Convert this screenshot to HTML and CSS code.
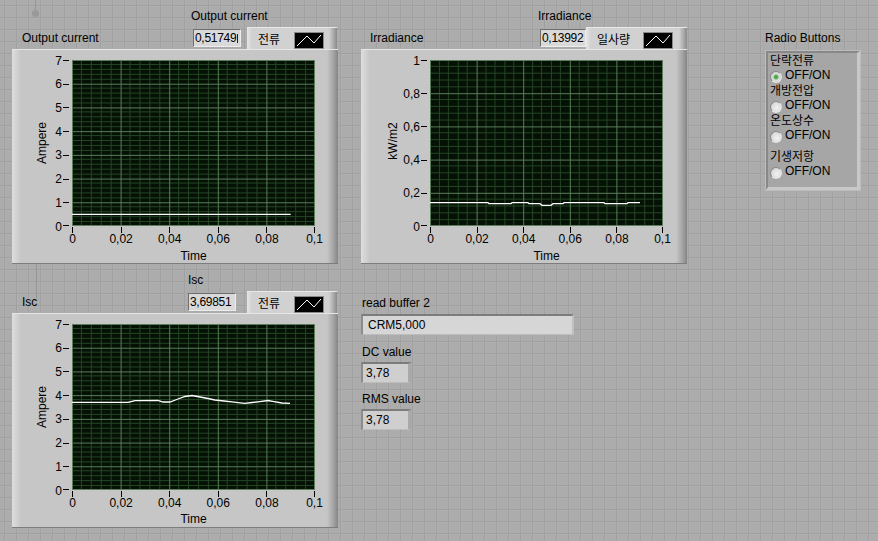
FILE: index.html
```html
<!DOCTYPE html>
<html lang="ko">
<head>
<meta charset="utf-8">
<title>Front Panel</title>
<link rel="stylesheet" href="styles.css">
</head>
<body>
<main class="panel">
  <span class="origin origin-top"></span>
  <span class="origin-line origin-line-top"></span>
  <span class="origin-line origin-line-mid"></span>

  <section class="graph g1">
    <div class="graph-head">
      <span class="cap">Output current</span>
      <div class="readout">
        <span class="readout-label">Output current</span>
        <span class="readout-box clipped">0,51749</span>
      </div>
      <div class="legend">
        <span>전류</span>
        <svg class="legend-icon" width="28" height="15" viewBox="0 0 28 15"><polyline points="2,13 12,3 19,10 26,2"/></svg>
      </div>
    </div>
    <div class="frame">
      <svg class="plot" width="326" height="213" viewBox="0 0 326 213">
        <defs>
          <pattern id="grid1" x="60" y="10" width="48.6" height="23.714" patternUnits="userSpaceOnUse">
            <path class="minor" d="M9.72 0V23.714M19.44 0V23.714M29.16 0V23.714M38.88 0V23.714M0 4.743H48.6M0 9.486H48.6M0 14.229H48.6M0 18.971H48.6"/>
            <path class="major" d="M0.5 0V23.714M0 0.5H48.6"/>
          </pattern>
        </defs>
        <rect class="plot-bg" x="60" y="10" width="243" height="166"/>
        <rect x="60" y="10" width="243" height="166" fill="url(#grid1)"/>
        <path class="major" d="M302.5 10V176M60 175.5H303"/>
        <path class="tick" d="M51 10.5H57M51 34.2H57M51 57.9H57M51 81.6H57M51 105.4H57M51 129.1H57M51 152.8H57M51 175.5H57"/>
        <path class="tick" d="M60.5 177V183M109.1 177V183M157.7 177V183M206.3 177V183M254.9 177V183M302.5 177V183"/>
        <g class="ylab">
          <text x="50" y="14.5">7</text>
          <text x="50" y="38.2">6</text>
          <text x="50" y="61.9">5</text>
          <text x="50" y="85.6">4</text>
          <text x="50" y="109.4">3</text>
          <text x="50" y="133.1">2</text>
          <text x="50" y="156.8">1</text>
          <text x="50" y="180.5">0</text>
        </g>
        <g class="xlab">
          <text x="60.5" y="193">0</text>
          <text x="109.1" y="193">0,02</text>
          <text x="157.7" y="193">0,04</text>
          <text x="206.3" y="193">0,06</text>
          <text x="254.9" y="193">0,08</text>
          <text x="302.5" y="193">0,1</text>
        </g>
        <text class="axis-name" x="181.5" y="210">Time</text>
        <text class="axis-name" transform="translate(34 93) rotate(-90)">Ampere</text>
        <polyline class="trace" points="60,164.3 278.7,164.3"/>
      </svg>
    </div>
  </section>

  <section class="graph g2">
    <div class="graph-head">
      <span class="cap">Irradiance</span>
      <div class="readout">
        <span class="readout-label">Irradiance</span>
        <span class="readout-box">0,13992</span>
      </div>
      <div class="legend">
        <span>일사량</span>
        <svg class="legend-icon" width="28" height="15" viewBox="0 0 28 15"><polyline points="2,13 12,3 19,10 26,2"/></svg>
      </div>
    </div>
    <div class="frame">
      <svg class="plot" width="326" height="213" viewBox="0 0 326 213">
        <defs>
          <pattern id="grid2" x="69" y="10" width="46.6" height="33.2" patternUnits="userSpaceOnUse">
            <path class="minor" d="M9.32 0V33.2M18.64 0V33.2M27.96 0V33.2M37.28 0V33.2M0 6.64H46.6M0 13.28H46.6M0 19.92H46.6M0 26.56H46.6"/>
            <path class="major" d="M0.5 0V33.2M0 0.5H46.6"/>
          </pattern>
        </defs>
        <rect class="plot-bg" x="69" y="10" width="233" height="166"/>
        <rect x="69" y="10" width="233" height="166" fill="url(#grid2)"/>
        <path class="major" d="M301.5 10V176M69 175.5H302"/>
        <path class="tick" d="M60 10.5H66M60 43.7H66M60 76.9H66M60 110.1H66M60 143.3H66M60 175.5H66"/>
        <path class="tick" d="M69.5 177V183M116.1 177V183M162.7 177V183M209.3 177V183M255.9 177V183M301.5 177V183"/>
        <g class="ylab">
          <text x="59" y="14.5">1</text>
          <text x="59" y="47.7">0,8</text>
          <text x="59" y="80.9">0,6</text>
          <text x="59" y="114.1">0,4</text>
          <text x="59" y="147.3">0,2</text>
          <text x="59" y="180.5">0</text>
        </g>
        <g class="xlab">
          <text x="69.5" y="193">0</text>
          <text x="116.1" y="193">0,02</text>
          <text x="162.7" y="193">0,04</text>
          <text x="209.3" y="193">0,06</text>
          <text x="255.9" y="193">0,08</text>
          <text x="301.5" y="193">0,1</text>
        </g>
        <text class="axis-name" x="185.5" y="210">Time</text>
        <text class="axis-name" transform="translate(36 91) rotate(-90)">kW/m2</text>
        <polyline class="trace" points="69,152.7 127,152.7 128,153.7 150,153.7 151,152.7 167,152.7 168,153.7 179,153.7 181,155.3 190,155.3 192,153.7 202,153.7 203,152.7 243,152.7 244,153.7 266,153.7 267,152.7 279,152.7"/>
      </svg>
    </div>
  </section>

  <section class="graph g3">
    <div class="graph-head">
      <span class="cap">Isc</span>
      <div class="readout">
        <span class="readout-label">Isc</span>
        <span class="readout-box">3,69851</span>
      </div>
      <div class="legend">
        <span>전류</span>
        <svg class="legend-icon" width="28" height="15" viewBox="0 0 28 15"><polyline points="2,13 12,3 19,10 26,2"/></svg>
      </div>
    </div>
    <div class="frame">
      <svg class="plot" width="326" height="213" viewBox="0 0 326 213">
        <defs>
          <pattern id="grid3" x="60" y="10" width="48.6" height="23.714" patternUnits="userSpaceOnUse">
            <path class="minor" d="M9.72 0V23.714M19.44 0V23.714M29.16 0V23.714M38.88 0V23.714M0 4.743H48.6M0 9.486H48.6M0 14.229H48.6M0 18.971H48.6"/>
            <path class="major" d="M0.5 0V23.714M0 0.5H48.6"/>
          </pattern>
        </defs>
        <rect class="plot-bg" x="60" y="10" width="243" height="166"/>
        <rect x="60" y="10" width="243" height="166" fill="url(#grid3)"/>
        <path class="major" d="M302.5 10V176M60 175.5H303"/>
        <path class="tick" d="M51 10.5H57M51 34.2H57M51 57.9H57M51 81.6H57M51 105.4H57M51 129.1H57M51 152.8H57M51 175.5H57"/>
        <path class="tick" d="M60.5 177V183M109.1 177V183M157.7 177V183M206.3 177V183M254.9 177V183M302.5 177V183"/>
        <g class="ylab">
          <text x="50" y="14.5">7</text>
          <text x="50" y="38.2">6</text>
          <text x="50" y="61.9">5</text>
          <text x="50" y="85.6">4</text>
          <text x="50" y="109.4">3</text>
          <text x="50" y="133.1">2</text>
          <text x="50" y="156.8">1</text>
          <text x="50" y="180.5">0</text>
        </g>
        <g class="xlab">
          <text x="60.5" y="193">0</text>
          <text x="109.1" y="193">0,02</text>
          <text x="157.7" y="193">0,04</text>
          <text x="206.3" y="193">0,06</text>
          <text x="254.9" y="193">0,08</text>
          <text x="302.5" y="193">0,1</text>
        </g>
        <text class="axis-name" x="181.5" y="209">Time</text>
        <text class="axis-name" transform="translate(34 93) rotate(-90)">Ampere</text>
        <polyline class="trace" points="60,88.3 116,88.3 123,86.6 146,86.4 151,88 158,88 166,85 173,82.5 180,81.5 188,83 196,84.5 203,86 212,87 220,87.8 226,88.6 233,89.4 240,88.5 246,87.8 256,86.5 262,87.6 270,89 278,89.4"/>
      </svg>
    </div>
  </section>

  <section class="indicators">
    <span class="ind-label">read buffer 2</span>
    <span class="string-box">CRM5,000</span>
    <span class="ind-label ind-gap">DC value</span>
    <span class="num-box">3,78</span>
    <span class="ind-label ind-gap2">RMS value</span>
    <span class="num-box">3,78</span>
  </section>

  <section class="radios">
    <span class="radio-title">Radio Buttons</span>
    <div class="radio-box">
      <div class="radio-item">
        <span class="radio-name">단락전류</span>
        <span class="radio-row"><span class="radio-dot on"></span>OFF/ON</span>
      </div>
      <div class="radio-item">
        <span class="radio-name">개방전압</span>
        <span class="radio-row"><span class="radio-dot"></span>OFF/ON</span>
      </div>
      <div class="radio-item">
        <span class="radio-name">온도상수</span>
        <span class="radio-row"><span class="radio-dot"></span>OFF/ON</span>
      </div>
      <div class="radio-item radio-item-last">
        <span class="radio-name">기생저항</span>
        <span class="radio-row"><span class="radio-dot"></span>OFF/ON</span>
      </div>
    </div>
  </section>
</main>
</body>
</html>
```

FILE: styles.css
```css
* { box-sizing: border-box; }

html, body {
  margin: 0;
  padding: 0;
}

body {
  width: 878px;
  height: 541px;
  overflow: hidden;
  font: 12px "Liberation Sans", "Noto Sans CJK KR", sans-serif;
  color: #000;
  background-color: #acacac;
  background-image:
    linear-gradient(to right, #a0a0a0 1px, #b2b2b2 1px, transparent 2px),
    linear-gradient(to bottom, #a0a0a0 1px, #b2b2b2 1px, transparent 2px);
  background-size: 12px 12px;
  background-position: 4px 5px;
}

.panel {
  position: relative;
  width: 878px;
  height: 541px;
}

/* panel origin marks (free canvas decoration) */
.origin {
  position: absolute;
  width: 7px;
  height: 7px;
  border-radius: 50%;
  background: #999;
}
.origin-top { left: 32px; top: 10px; }

.origin-line {
  position: absolute;
  width: 1px;
  background: #959595;
}
.origin-line-top { left: 35px; top: 0; height: 10px; }
.origin-line-mid { left: 36px; top: 264px; height: 34px; }

/* ---------- graphs (free canvas objects) ---------- */
.graph {
  position: absolute;
  width: 326px;
}
.g1 { left: 12px; top: 10px; }
.g2 { left: 361px; top: 10px; }
.g3 { left: 12px; top: 274px; }

.graph-head {
  display: flex;
  height: 39px;
}

.cap {
  align-self: flex-end;
  margin: 0 0 4px 10px;
  line-height: 14px;
  white-space: nowrap;
}
.g2 .cap { margin-left: 9px; }

.readout {
  margin-left: auto;
  width: 48px;
  display: flex;
  flex-direction: column;
}
.g2 .readout { width: 46px; }

.readout-label {
  line-height: 13px;
  margin-left: -2px;
  white-space: nowrap;
}
.g3 .readout-label { margin-left: 0; }

.readout-box {
  position: relative;
  margin-top: 6px;
  height: 18px;
  line-height: 16px;
  padding-left: 1px;
  letter-spacing: -0.3px;
  overflow: hidden;
  white-space: nowrap;
  background: #d9d9d9;
  border-top: 1px solid #6e6e6e;
  border-left: 1px solid #6e6e6e;
  border-right: 1px solid #ececec;
  border-bottom: 1px solid #ececec;
}
/* partially scrolled-off digit at the right edge of the display */
.clipped::after {
  content: "";
  position: absolute;
  right: 2px;
  top: 4px;
  width: 1px;
  height: 9px;
  background: #222;
}

.legend {
  align-self: flex-end;
  width: 90px;
  height: 22px;
  margin: 0 1px 0 6px;
  padding: 0 14px 0 11px;
  display: flex;
  align-items: center;
  justify-content: space-between;
  background: linear-gradient(to right, #e6e6e6 0, #d1d1d1 5px, #d1d1d1 calc(100% - 8px), #a6a6a6 calc(100% - 3px), #8a8a8a 100%);
  border-top: 1px solid #e8e8e8;
}
.g2 .legend {
  width: 101px;
  margin: 0;
  padding: 0 15px 0 11px;
}
.g3 .legend { margin-left: 11px; }

.legend-icon {
  display: block;
  margin-top: 3px;
  background: #000;
  outline: 1px solid #8a8a8a;
}
.legend-icon polyline {
  fill: none;
  stroke: #fff;
  stroke-width: 1;
}

.frame {
  height: 215px;
  background: linear-gradient(to right, #dedede 0, #c6c6c6 9px, #c6c6c6 calc(100% - 11px), #a6a6a6 calc(100% - 5px), #858585 100%);
  border-top: 1px solid #e6e6e6;
  border-bottom: 1px solid #7d7d7d;
}

.plot {
  display: block;
}
.plot text {
  font: 12px "Liberation Sans", sans-serif;
  fill: #000;
}
.plot .ylab text { text-anchor: end; }
.plot .xlab text { text-anchor: middle; }
.plot .axis-name { text-anchor: middle; }

.plot-bg { fill: #041104; }
.minor {
  stroke: #244424;
  stroke-width: 1;
  fill: none;
  shape-rendering: crispEdges;
}
.major {
  stroke: #5b7d5b;
  stroke-width: 1;
  fill: none;
  shape-rendering: crispEdges;
}
.tick {
  stroke: #000;
  stroke-width: 1;
  fill: none;
  shape-rendering: crispEdges;
}
.trace {
  fill: none;
  stroke: #ffffff;
  stroke-width: 1.3;
}

/* ---------- indicators ---------- */
.indicators {
  position: absolute;
  left: 361px;
  top: 296px;
  display: flex;
  flex-direction: column;
  align-items: flex-start;
}

.ind-label {
  line-height: 14px;
  margin-left: 1px;
}
.ind-gap { margin-top: 10px; }
.ind-gap2 { margin-top: 9px; }

.string-box,
.num-box {
  margin-top: 4px;
  height: 21px;
  line-height: 18px;
  background: #d6d6d6;
  border-top: 2px solid #7c7c7c;
  border-left: 2px solid #8c8c8c;
  border-right: 2px solid #c0c0c0;
  border-bottom: 1px solid #bdbdbd;
}
.string-box {
  width: 213px;
  padding-left: 5px;
}
.num-box {
  width: 51px;
  margin-top: 3px;
  padding-left: 3px;
  background: #cfcfcf;
  border-right: 4px solid #a9a9a9;
}

/* ---------- radio buttons ---------- */
.radios {
  position: absolute;
  left: 765px;
  top: 31px;
  display: flex;
  flex-direction: column;
  align-items: flex-start;
}

.radio-title {
  line-height: 14px;
}

.radio-box {
  margin: 6px 0 0 1px;
  width: 94px;
  height: 139px;
  padding: 0 0 0 2px;
  background: #a6a6a6;
  border-top: 2px solid #888;
  border-left: 2px solid #888;
  border-right: 3px solid #c8c8c8;
  border-bottom: 3px solid #c8c8c8;
  box-shadow: 0 0 0 1px #bcbcbc;
  display: flex;
  flex-direction: column;
}

.radio-item {
  display: flex;
  flex-direction: column;
  height: 30px;
}
.radio-item-last { margin-top: 6px; }

.radio-name {
  line-height: 14px;
  font-family: "Noto Sans CJK KR", "Liberation Sans", sans-serif;
}

.radio-row {
  display: flex;
  align-items: flex-start;
  margin-top: 1px;
  line-height: 14px;
  height: 15px;
}

.radio-dot {
  width: 12px;
  height: 12px;
  margin: 3px 3px 0 0;
  border-radius: 50%;
  background: radial-gradient(circle at 60% 60%, #f2f2f2 0, #dcdcdc 60%, #bdbdbd 100%);
  border: 1px solid #8a8a8a;
  border-right-color: #e4e4e4;
  border-bottom-color: #e4e4e4;
  flex: none;
}
.radio-dot.on {
  background: radial-gradient(circle, #3c9a3c 0, #5cb85c 2px, #dcdcdc 3px, #d0d0d0 100%);
}
```
